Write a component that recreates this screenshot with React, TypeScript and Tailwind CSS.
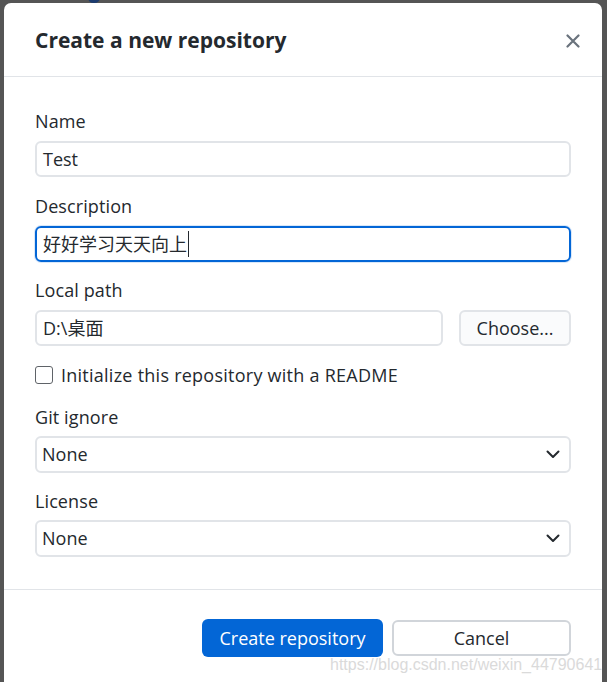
import React from "react";

const font = { fontFamily: '"Open Sans", "Noto Sans CJK SC", sans-serif' };

function Label({ children }: { children: React.ReactNode }) {
  return <div className="text-[18px] leading-[24px] tracking-[0.1px] text-[#24292e]">{children}</div>;
}

function Chevron() {
  return (
    <svg width="14" height="9" viewBox="0 0 14 9" fill="none">
      <path d="M1.5 1.5 L7 7 L12.5 1.5" stroke="#24292e" strokeWidth="2" strokeLinecap="round" strokeLinejoin="round" />
    </svg>
  );
}

function Select({ value }: { value: string }) {
  return (
    <div className="flex h-[37px] items-center justify-between rounded-[6px] border-2 border-[#e1e4e8] bg-white pl-[5px] pr-[9px] text-[18px] text-[#24292e]">
      <span>{value}</span>
      <Chevron />
    </div>
  );
}

export default function App() {
  return (
    <div className="relative min-h-[682px] overflow-hidden bg-[#555555] pt-[3px]" style={font}>
      <div className="absolute left-[88px] top-[-8px] h-[11px] w-[12px] rounded-full bg-[#1d3b6e]" />
      <div className="relative ml-[4px] h-[700px] w-[598px] rounded-t-[7px] bg-white">
        {/* Header */}
        <div className="flex h-[74px] items-center justify-between border-b border-[#e1e4e8] pl-[31px] pr-[22px] pt-[2px]">
          <h1 className="text-[21px] font-bold text-[#24292e]">Create a new repository</h1>
          <svg width="14" height="14" viewBox="0 0 14 14">
            <path d="M1.5 1.5 L12.5 12.5 M12.5 1.5 L1.5 12.5" stroke="#6a737d" strokeWidth="2.2" strokeLinecap="round" />
          </svg>
        </div>

        {/* Body */}
        <div className="flex flex-col px-[31px] pb-[32px] pt-[32px]">
          <Label>Name</Label>
          <div className="mt-[8px] flex h-[36px] items-center rounded-[6px] border-2 border-[#e1e4e8] pl-[6px] text-[18px] text-[#24292e]">
            Test
          </div>

          <div className="mt-[17px]">
            <Label>Description</Label>
          </div>
          <div className="mt-[8px] flex h-[36px] items-center rounded-[6px] border-2 border-[#0366d6] pl-[6px] text-[18px] text-[#24292e] shadow-[0_0_0_1px_rgba(3,102,214,0.15)]">
            <span>好好学习天天向上</span>
            <span className="ml-[1px] inline-block h-[26px] w-[1px] bg-[#24292e]" />
          </div>

          <div className="mt-[16px]">
            <Label>Local path</Label>
          </div>
          <div className="mt-[8px] flex gap-[16px]">
            <div className="flex h-[36px] flex-1 items-center rounded-[6px] border-2 border-[#e1e4e8] pl-[6px] text-[18px] text-[#24292e]">
              D:\桌面
            </div>
            <div className="flex h-[36px] w-[112px] items-center justify-center rounded-[6px] border-2 border-[#e1e4e8] bg-[#fafbfc] text-[18px] text-[#24292e]">
              Choose...
            </div>
          </div>

          <div className="mt-[19px] flex items-center gap-[8px]">
            <div className="h-[18px] w-[18px] rounded-[3px] border border-[#5f6368] bg-white" />
            <span className="text-[18px] leading-[20px] tracking-[0.25px] text-[#24292e]">Initialize this repository with a README</span>
          </div>

          <div className="mt-[20px]">
            <Label>Git ignore</Label>
          </div>
          <div className="mt-[7px]">
            <Select value="None" />
          </div>

          <div className="mt-[16px]">
            <Label>License</Label>
          </div>
          <div className="mt-[7px]">
            <Select value="None" />
          </div>
        </div>

        {/* Footer */}
        <div className="flex justify-end gap-[9px] border-t border-[#e1e4e8] px-[31px] pt-[29px]">
          <div className="flex h-[38px] w-[181px] items-center justify-center rounded-[6px] bg-[#0366d6] text-[18px] text-white">
            Create repository
          </div>
          <div className="mt-[1px] flex h-[36px] w-[179px] items-center justify-center rounded-[6px] border-2 border-[#d1d5da] bg-white text-[18px] text-[#24292e]">
            Cancel
          </div>
        </div>
      </div>
      <div
        className="absolute left-[330px] top-[653px] text-[16px] text-[#dadada]"
        style={{ fontFamily: '"Liberation Sans", Arial, sans-serif' }}
      >
        https://blog.csdn.net/weixin_44790641
      </div>
    </div>
  );
}
